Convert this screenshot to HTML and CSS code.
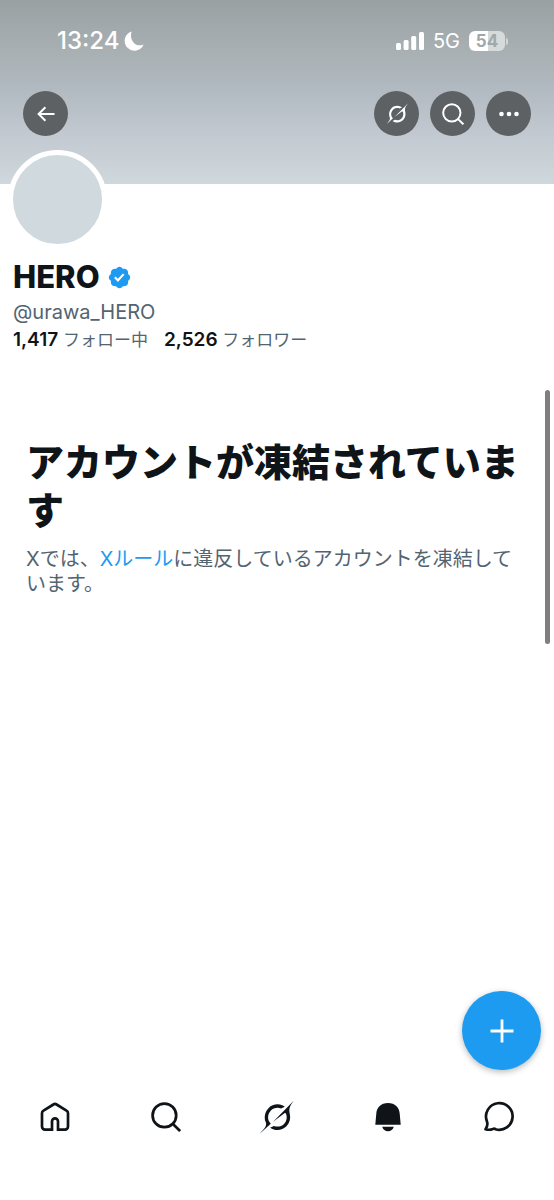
FILE: index.html
```
<!DOCTYPE html>
<html lang="ja">
<head>
<meta charset="utf-8">
<meta name="viewport" content="width=device-width, initial-scale=1">
<title>HERO (@urawa_HERO)</title>
<link rel="stylesheet" href="styles.css">
</head>
<body>
<svg class="defs" aria-hidden="true">
  <symbol id="slash-ring" viewBox="0 0 33 32"><path fill="currentColor" d="M12.745 20.54l10.97-8.19c.539-.4 1.307-.244 1.564.38 1.349 3.288.746 7.241-1.938 9.955-2.683 2.714-6.417 3.31-9.83 1.954l-3.728 1.745c5.347 3.697 11.84 2.782 15.898-1.324 3.219-3.255 4.216-7.692 3.284-11.693l.008.009c-1.351-5.878.332-8.227 3.782-13.031L33 0l-4.54 4.59v-.014L12.743 20.544m-2.263 1.987c-3.837-3.707-3.175-9.446.1-12.755 2.42-2.449 6.388-3.448 9.852-1.979l3.72-1.737c-.67-.49-1.53-1.017-2.515-1.387-4.455-1.854-9.789-.931-13.41 2.728-3.483 3.523-4.579 8.94-2.697 13.561 1.405 3.454-.899 5.898-3.22 8.364C1.49 30.2.666 31.074 0 32l10.478-9.466"/></symbol>
  <symbol id="magnifier" viewBox="0 0 30 30"><g fill="none" stroke="currentColor" stroke-width="2.7"><circle cx="13.4" cy="13.4" r="11.8"/><path d="M21.7 21.7l7.4 7.4"/></g></symbol>
</svg>
<div class="page">
  <header class="banner">
    <div class="status">
      <div class="status-left">
        <span class="time">13:24</span>
        <svg class="moon" viewBox="0 0 20 20" aria-hidden="true"><path fill="currentColor" d="M7.6.5A9.8 9.8 0 1 0 19.6 13.4C12 17 4.8 9.500 7.600.5z"/></svg>
      </div>
      <div class="status-right">
        <svg class="signal" viewBox="0 0 28 18" aria-hidden="true"><g fill="currentColor"><rect x="0" y="11" width="5" height="7" rx="1.5"/><rect x="7.6" y="8" width="5" height="10" rx="1.5"/><rect x="15.2" y="4" width="5" height="14" rx="1.5"/><rect x="23" y="0" width="5" height="18" rx="1.5"/></g></svg>
        <span class="network">5G</span>
        <div class="battery"><span class="battery-level">54</span><span class="battery-cap"></span></div>
      </div>
    </div>
    <div class="toolbar">
      <button class="round" aria-label="戻る"><svg class="icon-back" viewBox="0 0 18 16"><path d="M17.5 8H1.8M8.400 1.200L1.600 8l6.800 6.800" fill="none" stroke="currentColor" stroke-width="2"/></svg></button>
      <div class="actions">
        <button class="round" aria-label="Grok"><svg class="icon-small"><use href="#slash-ring"/></svg></button>
        <button class="round" aria-label="検索"><svg class="icon-small"><use href="#magnifier"/></svg></button>
        <button class="round" aria-label="その他"><svg class="icon-dots" viewBox="0 0 20 6"><g fill="currentColor"><circle cx="2.5" cy="3" r="2.3"/><circle cx="10" cy="3" r="2.3"/><circle cx="17.5" cy="3" r="2.3"/></g></svg></button>
      </div>
    </div>
  </header>
  <main class="content">
    <section class="profile">
      <div class="avatar"></div>
      <div class="name-row">
        <h1 class="name">HERO</h1>
        <svg class="verified" viewBox="0 0 22 22" role="img" aria-label="認証済み"><path fill="#1d9bf0" d="M20.396 11c-.018-.646-.215-1.275-.57-1.816-.354-.54-.852-.972-1.438-1.246.223-.607.27-1.264.14-1.897-.131-.634-.437-1.218-.882-1.687-.47-.445-1.053-.75-1.687-.882-.633-.13-1.29-.083-1.897.14-.273-.587-.704-1.086-1.245-1.44S11.647 1.62 11 1.604c-.646.017-1.273.213-1.813.568s-.969.854-1.24 1.44c-.608-.223-1.267-.272-1.902-.14-.635.13-1.22.436-1.69.882-.445.47-.749 1.055-.878 1.688-.13.633-.08 1.29.144 1.896-.587.274-1.087.705-1.443 1.245-.356.54-.555 1.17-.574 1.817.02.647.218 1.276.574 1.817.356.54.856.972 1.443 1.245-.224.606-.274 1.263-.144 1.896.13.634.433 1.218.877 1.688.47.443 1.054.747 1.687.878.633.132 1.29.084 1.897-.136.274.586.705 1.084 1.246 1.439.54.354 1.17.551 1.816.569.647-.016 1.276-.213 1.817-.567s.972-.854 1.245-1.44c.604.239 1.266.296 1.903.164.636-.132 1.22-.447 1.68-.907.46-.46.776-1.044.908-1.681s.075-1.299-.165-1.903c.586-.274 1.084-.705 1.439-1.246.354-.54.551-1.17.569-1.816z"/><path fill="#fff" d="M9.662 14.85l-3.429-3.428 1.293-1.302 2.072 2.072 4.4-4.794 1.347 1.246z"/></svg>
      </div>
      <p class="handle">@urawa_HERO</p>
      <p class="counts"><span><b>1,417</b> フォロー中</span><span><b>2,526</b> フォロワー</span></p>
    </section>
    <section class="notice">
      <h2 class="notice-title">アカウントが凍結されています</h2>
      <p class="notice-text">Xでは、<a class="link" href="#rules">Xルール</a>に違反しているアカウントを凍結しています。</p>
    </section>
    <div class="scroll-thumb"></div>
  </main>
  <footer class="bottom">
    <button class="compose" aria-label="ポストする"><svg class="icon-plus" viewBox="0 0 24 24"><path d="M12 .5v23M.5 12h23" stroke="currentColor" stroke-width="2.8"/></svg></button>
    <nav class="tabs">
      <a class="tab" href="#home" aria-label="ホーム"><svg class="icon" viewBox="0 0 30 30"><path d="M5 27.6h7V19.3a3 3 0 0 1 6 0v8.3h7a3 3 0 0 0 3-3V11.2a3 3 0 0 0-1.5-2.6L16.6 2.5a3 3 0 0 0-3.2 0L3.5 8.6A3 3 0 0 0 2 11.2v13.4a3 3 0 0 0 3 3z" fill="none" stroke="currentColor" stroke-width="2.7"/></svg></a>
      <a class="tab" href="#search" aria-label="検索"><svg class="icon"><use href="#magnifier"/></svg></a>
      <a class="tab" href="#grok" aria-label="Grok"><svg class="icon icon-large"><use href="#slash-ring"/></svg></a>
      <a class="tab" href="#notifications" aria-label="通知"><svg class="icon" viewBox="0 0 30 30"><path fill="currentColor" d="M15 1C8 1 3.700 5.400 3.300 11.500L2.300 22.800h25.400l-1-11.300C26.300 5.400 22 1 15 1zM9.200 24.800h11.600c-.8 2.800-3 4.500-5.800 4.500s-5-1.700-5.800-4.500z"/></svg></a>
      <a class="tab" href="#chat" aria-label="チャット"><svg class="icon" viewBox="0 0 30 30"><path d="M1.500 27.300C3.600 24.500 3.900 22 2.800 19A13.300 13.300 0 1 1 11.500 27.200C10.400 26.400 9.900 26.500 8.800 27 6.400 28 4.200 28 1.500 27.300z" fill="none" stroke="currentColor" stroke-width="2.7" stroke-linejoin="round"/></svg></a>
    </nav>
  </footer>
</div>
</body>
</html>
```
FILE: styles.css
```
* { box-sizing: border-box; }
body {
  margin: 0;
  background: #fff;
  color: #0f1419;
  font-family: Inter, "Noto Sans CJK JP", sans-serif;
}
h1, h2, p { margin: 0; }
button { border: 0; padding: 0; font: inherit; cursor: pointer; }
svg { display: block; }
.defs { position: absolute; width: 0; height: 0; }
.page { min-height: 100vh; display: flex; flex-direction: column; }

.banner {
  padding: 26px 23px 48px;
  background: linear-gradient(#99a1a3 0%, #a9b1b4 30%, #b0b8bf 45%, #c3cad1 75%, #cfd8dd 100%);
  color: #fff;
}
.status {
  display: flex;
  justify-content: space-between;
  align-items: center;
  height: 30px;
  padding: 0 23px 0 34px;
}
.status-left, .status-right { display: flex; align-items: center; }
.status-left { gap: 5px; }
.status-right { gap: 9px; }
.time { font-size: 24px; font-weight: 500; line-height: 30px; }
.moon { width: 20px; height: 20px; }
.signal { width: 28px; height: 18px; }
.network { font-size: 20px; line-height: 30px; }
.battery { display: flex; align-items: center; gap: 1px; }
.battery-level {
  width: 36px;
  height: 20px;
  border-radius: 6px;
  background: linear-gradient(90deg, #fff 54%, #d6dadb 54%);
  color: #a0a8ab;
  font-size: 17px;
  font-weight: 700;
  line-height: 20px;
  text-align: center;
}
.battery-cap { width: 2px; height: 7px; border-radius: 0 2px 2px 0; background: #d0d5d7; }

.toolbar { display: flex; justify-content: space-between; margin-top: 35px; }
.actions { display: flex; gap: 11px; }
.round {
  display: grid;
  place-items: center;
  width: 45px;
  height: 45px;
  border-radius: 50%;
  background: #5d6164;
  color: #fff;
}
.icon-back { width: 18px; height: 16px; }
.icon-small { width: 22px; height: 22px; }
.icon-dots { width: 20px; height: 6px; }

.content { position: relative; flex: 1; }
.profile { padding: 0 13px; }
.avatar {
  width: 99px;
  height: 99px;
  margin: -34px 0 0 -5px;
  border: 5px solid #fff;
  border-radius: 50%;
  background: #cfd9de;
  position: relative;
}
.name-row { display: flex; align-items: center; gap: 7px; margin-top: 10px; }
.name { font-size: 31px; font-weight: 800; line-height: 36px; }
.verified { width: 25px; height: 25px; }
.handle { margin-top: 3px; color: #536471; font-size: 20px; line-height: 28px; }
.counts {
  display: flex;
  flex-wrap: wrap;
  gap: 0 16px;
  color: #536471;
  font-size: 17px;
  line-height: 28px;
}
.counts b { color: #0f1419; font-size: 19px; font-weight: 600; }

.notice { padding: 84px 26px 0; }
.notice-title { font-size: 38px; font-weight: 800; line-height: 48px; }
.notice-text { margin-top: 13px; color: #536471; font-size: 20px; line-height: 25px; }
.link { color: #1d9bf0; text-decoration: none; }
.scroll-thumb {
  position: absolute;
  top: 206px;
  right: 4px;
  width: 5px;
  height: 254px;
  border-radius: 3px;
  background: #7f7f7f;
}

.bottom { position: sticky; bottom: 0; }
.compose {
  display: grid;
  place-items: center;
  width: 79px;
  height: 79px;
  margin: 0 13px 0 auto;
  border-radius: 50%;
  background: #1d9bf0;
  color: #fff;
  box-shadow: 0 2px 6px rgba(0, 0, 0, .28);
}
.icon-plus { width: 24px; height: 24px; }
.tabs { display: flex; margin-top: 20px; padding-bottom: 56px; }
.tab { flex: 1; display: grid; place-items: center; height: 54px; color: #0f1419; }
.icon { width: 30px; height: 30px; overflow: visible; }
.icon-large { width: 34px; height: 34px; }
```
